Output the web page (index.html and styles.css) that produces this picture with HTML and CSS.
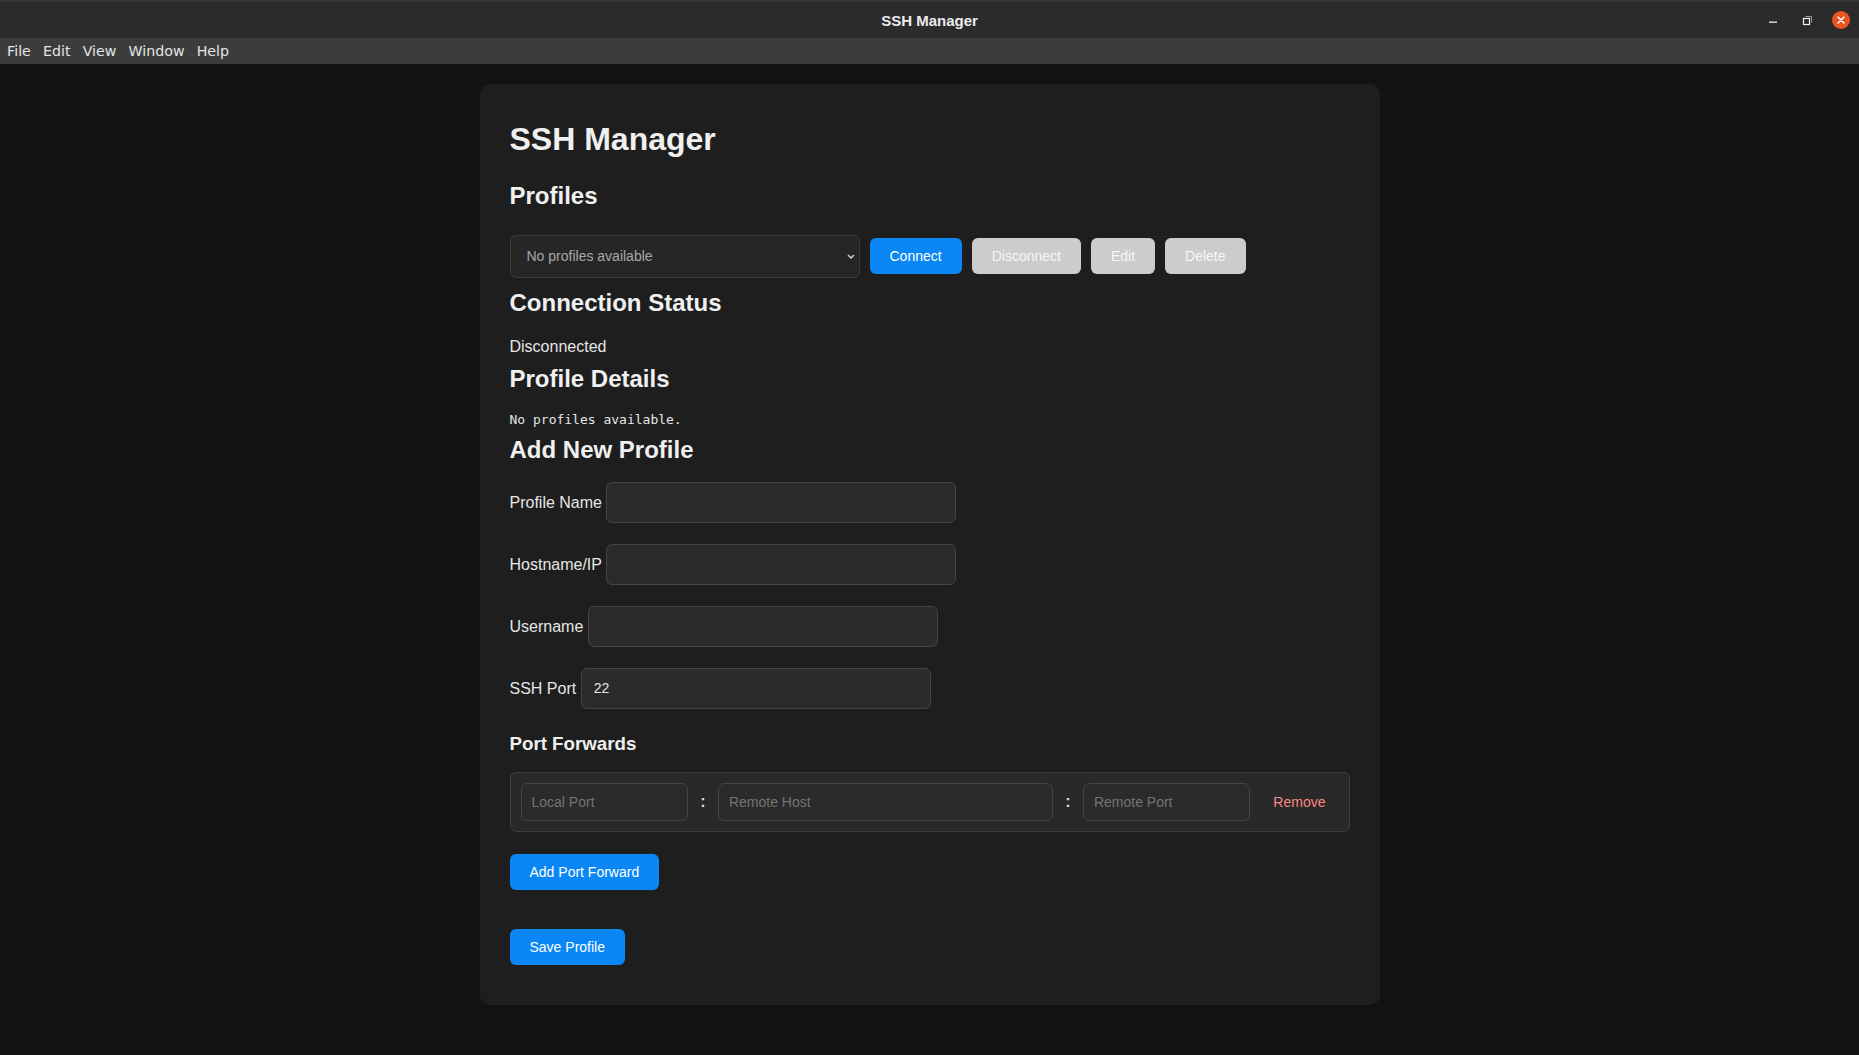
FILE: index.html
```html
<!DOCTYPE html>
<html lang="en">
<head>
<meta charset="utf-8">
<title>SSH Manager</title>
<link rel="stylesheet" href="styles.css">
</head>
<body>
<header class="titlebar">
  <div class="titlebar-spacer"></div>
  <div class="window-title">SSH Manager</div>
  <div class="window-controls">
    <span class="wc wc-min">
      <svg width="8" height="8" viewBox="0 0 8 8"><rect x="0" y="5.5" width="8" height="1.3" fill="#f2f2f2"/></svg>
    </span>
    <span class="wc wc-max">
      <svg width="11" height="11" viewBox="0 0 11 11"><path d="M3.5 1.5 H9.5 V7.5" fill="none" stroke="#9a9a9a" stroke-width="1"/><rect x="1.5" y="3.5" width="6" height="6" fill="none" stroke="#f2f2f2" stroke-width="1.2"/></svg>
    </span>
    <span class="wc wc-close">
      <svg width="18" height="18" viewBox="0 0 18 18"><circle cx="9" cy="9" r="9" fill="#e95420"/><path d="M6 6 L12 12 M12 6 L6 12" stroke="#ffffff" stroke-width="1.5" stroke-linecap="round"/></svg>
    </span>
  </div>
</header>
<nav class="menubar">
  <span class="menu-item">File</span>
  <span class="menu-item">Edit</span>
  <span class="menu-item">View</span>
  <span class="menu-item">Window</span>
  <span class="menu-item">Help</span>
</nav>
<main class="page">
  <div class="card">
    <h1 class="app-title">SSH Manager</h1>

    <section>
      <h2 class="section-title">Profiles</h2>
      <div class="profile-row">
        <div class="select-wrap">
          <select class="profile-select">
            <option>No profiles available</option>
          </select>
          <svg class="select-chevron" width="8" height="5" viewBox="0 0 8 5"><path d="M1 1 L4 4 L7 1" fill="none" stroke="#d0d0d0" stroke-width="1.5"/></svg>
        </div>
        <button class="btn btn-primary">Connect</button>
        <button class="btn" disabled>Disconnect</button>
        <button class="btn" disabled>Edit</button>
        <button class="btn" disabled>Delete</button>
      </div>
    </section>

    <section>
      <h2 class="section-title">Connection Status</h2>
      <p class="status-text">Disconnected</p>
    </section>

    <section>
      <h2 class="section-title">Profile Details</h2>
      <pre class="details-text">No profiles available.</pre>
    </section>

    <section>
      <h2 class="section-title">Add New Profile</h2>
      <div class="form-fields">
        <div class="form-group"><label for="pname">Profile Name</label> <input id="pname" class="text-input" type="text"></div>
        <div class="form-group"><label for="phost">Hostname/IP</label> <input id="phost" class="text-input" type="text"></div>
        <div class="form-group"><label for="puser">Username</label> <input id="puser" class="text-input" type="text"></div>
        <div class="form-group"><label for="pport">SSH Port</label> <input id="pport" class="text-input" type="text" value="22"></div>
      </div>

      <h3 class="sub-title">Port Forwards</h3>
      <div class="forward-box">
        <div class="forward-row">
          <input class="fw-input" type="text" placeholder="Local Port">
          <span class="fw-colon">:</span>
          <input class="fw-input" type="text" placeholder="Remote Host">
          <span class="fw-colon">:</span>
          <input class="fw-input" type="text" placeholder="Remote Port">
          <button class="btn-remove">Remove</button>
        </div>
      </div>
      <button class="btn btn-primary">Add Port Forward</button>
      <div class="form-actions">
        <button class="btn btn-primary">Save Profile</button>
      </div>
    </section>
  </div>
</main>
</body>
</html>
```

FILE: styles.css
```css
html {
  background: #121212;
}
body {
  margin: 0;
  background: #121212;
  font-family: "Liberation Sans", Arial, sans-serif;
  color: #e6e6e6;
}

/* Window title bar */
.titlebar {
  box-sizing: border-box;
  height: 38px;
  border-top: 2px solid #363636;
  background: #2b2b2b;
  display: grid;
  grid-template-columns: 1fr auto 1fr;
  align-items: center;
}
.window-title {
  font-family: "Liberation Sans", Arial, sans-serif;
  font-weight: bold;
  font-size: 15px;
  color: #ececec;
}
.window-controls {
  justify-self: end;
  display: flex;
  padding-right: 1px;
}
.wc {
  width: 34px;
  height: 36px;
  display: flex;
  align-items: center;
  justify-content: center;
}
.wc svg {
  display: block;
}

/* Menu bar */
.menubar {
  box-sizing: border-box;
  height: 26px;
  padding: 1px 0 0 1px;
  background: #3c3c3c;
  display: flex;
  align-items: center;
  font-family: "DejaVu Sans", sans-serif;
  font-size: 14.2px;
  color: #e4e4e4;
}
.menu-item {
  padding: 0 6.1px;
  line-height: 25px;
}

/* Page */
.page {
  padding: 20px;
}
.card {
  max-width: 900px;
  box-sizing: border-box;
  margin: 0 auto;
  padding: 30px 30px 40px;
  background: #1e1e1e;
  border-radius: 10px;
}
.app-title {
  margin: 7px 0 24px;
  font-size: 32px;
  font-weight: bold;
  color: #f0f0f0;
}
.section-title {
  margin: 8px 0 0;
  font-size: 24px;
  font-weight: bold;
  color: #f0f0f0;
}
.sub-title {
  margin: 24px 0 17px;
  font-size: 18.72px;
  font-weight: bold;
  color: #f0f0f0;
}

/* Profiles row */
.profile-row {
  display: flex;
  align-items: center;
  gap: 10px;
  margin: 24.5px 0 11px;
}
.select-wrap {
  position: relative;
  width: 350px;
  height: 43px;
}
.profile-select {
  appearance: none;
  -webkit-appearance: none;
  box-sizing: border-box;
  width: 100%;
  height: 100%;
  padding: 0 24px 0 16px;
  background: #262626;
  border: 1px solid #3a3a3a;
  border-radius: 6px;
  color: #a8a8a8;
  font-family: "Liberation Sans", Arial, sans-serif;
  font-size: 14px;
  outline: none;
}
.select-chevron {
  position: absolute;
  right: 5px;
  top: 19px;
  pointer-events: none;
}

.btn {
  box-sizing: border-box;
  height: 36px;
  padding: 0 20px;
  border: none;
  border-radius: 6px;
  font-family: "Liberation Sans", Arial, sans-serif;
  font-size: 14px;
  color: #ffffff;
  background: #0a86f5;
  cursor: pointer;
}
.btn:disabled {
  background: #cccccc;
  color: #f7f7f7;
  cursor: not-allowed;
}

.status-text {
  margin: 21px 0 9px;
  font-size: 16px;
  color: #e6e6e6;
}
.details-text {
  margin: 19px 0 9.5px;
  font-family: "DejaVu Sans Mono", monospace;
  font-size: 13px;
  color: #e6e6e6;
}

/* Form */
.form-fields {
  margin-top: 17.5px;
}
.form-group {
  margin-bottom: 21px;
  font-size: 16px;
  color: #e6e6e6;
}
.text-input {
  box-sizing: border-box;
  width: 350px;
  height: 41px;
  padding: 0 12px;
  background: #2b2b2b;
  border: 1px solid #444444;
  border-radius: 6px;
  color: #e6e6e6;
  font-family: "Liberation Sans", Arial, sans-serif;
  font-size: 14px;
  outline: none;
}

.forward-box {
  padding: 10px;
  background: #292929;
  border: 1px solid #3c3c3c;
  border-radius: 6px;
  margin-bottom: 22px;
}
.forward-row {
  display: grid;
  grid-template-columns: minmax(0, 1fr) 10px minmax(0, 2fr) 10px minmax(0, 1fr) auto;
  align-items: center;
  gap: 10px;
}
.fw-input {
  box-sizing: border-box;
  width: 100%;
  height: 38px;
  padding: 0 10px;
  background: #2b2b2b;
  border: 1px solid #444444;
  border-radius: 6px;
  color: #e6e6e6;
  font-family: "Liberation Sans", Arial, sans-serif;
  font-size: 14px;
  outline: none;
}
.fw-input::placeholder {
  color: #747474;
}
.fw-colon {
  text-align: center;
  font-weight: bold;
  font-size: 16px;
  color: #dddddd;
}
.btn-remove {
  height: 38px;
  padding: 0 13px;
  border: none;
  background: transparent;
  color: #f98686;
  font-family: "Liberation Sans", Arial, sans-serif;
  font-size: 14px;
  cursor: pointer;
}
.form-actions {
  margin-top: 39.5px;
}
```
